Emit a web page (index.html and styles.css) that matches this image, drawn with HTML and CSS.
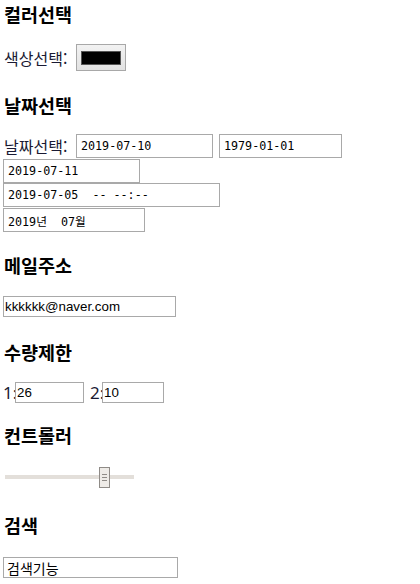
FILE: index.html
```html
<!DOCTYPE html>
<html lang="ko">
<head>
<meta charset="utf-8">
<link rel="stylesheet" href="styles.css">
</head>
<body>
<div class="page">
  <h3 class="head head-first">컬러선택</h3>
  <div class="row row-color">
    <span class="label">색상선택:</span>
    <span class="color-btn"><span class="swatch"></span></span>
  </div>

  <h3 class="head head-date">날짜선택</h3>
  <div class="row row-date first-date">
    <span class="label">날짜선택:</span>
    <input class="field date w137" type="text" value="2019-07-10" readonly>
    <input class="field date w123 gap-left" type="text" value="1979-01-01" readonly>
  </div>
  <div class="row row-date mt1">
    <input class="field date w137" type="text" value="2019-07-11" readonly>
  </div>
  <div class="row row-date">
    <input class="field date w217" type="text" value="2019-07-05  -- --:--" readonly>
  </div>
  <div class="row row-date mt1">
    <input class="field date w142" type="text" value="2019년  07월" readonly>
  </div>

  <h3 class="head head-mail">메일주소</h3>
  <div class="row row-mail">
    <input class="field text w173" type="text" value="kkkkkk@naver.com" readonly>
  </div>

  <h3 class="head head-num">수량제한</h3>
  <div class="row row-num">
    <span class="num-label">1:</span>
    <input class="field text w69" type="text" value="26" readonly>
    <span class="num-label second">2:</span>
    <input class="field text w62" type="text" value="10" readonly>
  </div>

  <h3 class="head head-range">컨트롤러</h3>
  <div class="row row-range">
    <div class="slider">
      <div class="track"></div>
      <div class="thumb"><span></span><span></span><span></span></div>
    </div>
  </div>

  <h3 class="head head-search">검색</h3>
  <div class="row row-search">
    <input class="field text search w175" type="text" value="검색기능" readonly>
  </div>
</div>
</body>
</html>
```

FILE: styles.css
```css
html, body {
  margin: 0;
  padding: 0;
  background: #ffffff;
}

.page {
  display: flex;
  flex-direction: column;
  align-items: flex-start;
  padding: 0 3px;
  font-family: "Noto Sans CJK KR", "Noto Sans", sans-serif;
  color: #000;
}

.head {
  margin: 0;
  height: 24px;
  line-height: 24px;
  font-size: 18.5px;
  font-weight: bold;
  padding-left: 1px;
}

.head-first { margin-top: 2px; }
.head-date { margin-top: 22px; }
.head-mail { margin-top: 21px; }
.head-num { margin-top: 23px; }
.head-range { margin-top: 20px; }
.head-search { margin-top: 25px; }

.row {
  display: flex;
  align-items: center;
}

.label {
  width: 73px;
  padding-left: 1px;
  box-sizing: border-box;
  font-size: 16px;
  line-height: 20px;
  color: #1a1a33;
  white-space: nowrap;
}

.row-color {
  margin-top: 18px;
  height: 27px;
}

.color-btn {
  box-sizing: border-box;
  width: 50px;
  height: 27px;
  border: 1px solid #a8a8a8;
  background: linear-gradient(#f2f2f2, #e2e2e2);
  display: flex;
  align-items: center;
  justify-content: center;
}

.swatch {
  width: 40px;
  height: 14px;
  box-sizing: border-box;
  background: #000;
  border: 1px solid #555;
}

.field {
  box-sizing: border-box;
  margin: 0;
  border: 1px solid #a9a9a9;
  background: #fff;
  color: #000;
  outline: none;
  padding: 0 0 0 3px;
}

.date {
  height: 24px;
  font-family: "DejaVu Sans Mono", "Noto Sans CJK KR", monospace;
  font-size: 11.7px;
  padding-left: 4px;
  white-space: pre;
}

.text {
  height: 21px;
  font-family: "Liberation Sans", Arial, sans-serif;
  font-size: 13.33px;
  padding-left: 1px;
}

.search {
  font-family: "Noto Sans CJK KR", sans-serif;
  font-size: 14px;
  padding-left: 3px;
}

.first-date { margin-top: 17px; }
.mt1 { margin-top: 1px; }
.gap-left { margin-left: 6px; }

.w137 { width: 137px; }
.w123 { width: 123px; }
.w217 { width: 217px; }
.w142 { width: 142px; }
.w173 { width: 173px; }
.w69 { width: 69px; }
.w62 { width: 62px; }
.w175 { width: 175px; }

.row-mail { margin-top: 19px; }

.row-num {
  margin-top: 18px;
  height: 21px;
}

.num-label {
  font-family: "Noto Sans", sans-serif;
  font-size: 17px;
  line-height: 21px;
  width: 12px;
  white-space: nowrap;
  color: #1a1a33;
}

.num-label.second {
  margin-left: 6px;
  width: 12px;
}

.row-range {
  margin-top: 20px;
}

.slider {
  position: relative;
  width: 131px;
  height: 21px;
}

.track {
  position: absolute;
  left: 2px;
  top: 8px;
  width: 129px;
  height: 4px;
  background: #e3dfda;
}

.thumb {
  position: absolute;
  left: 96px;
  top: 0;
  width: 11px;
  height: 21px;
  box-sizing: border-box;
  border: 1px solid #8f8b87;
  background: #eeebe7;
  display: flex;
  flex-direction: column;
  align-items: center;
  justify-content: center;
  gap: 2px;
}

.thumb span {
  display: block;
  width: 5px;
  height: 1px;
  background: #8f8b87;
}

.row-search { margin-top: 20px; }
```
